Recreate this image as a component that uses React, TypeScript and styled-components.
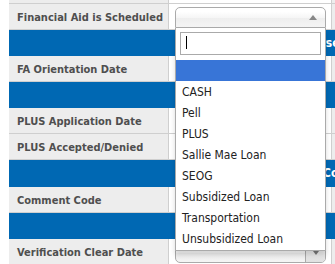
import React from "react";
import styled, { createGlobalStyle } from "styled-components";

const GlobalStyle = createGlobalStyle`
  html,
  body {
    margin: 0;
    padding: 0;
    overflow: hidden;
    background: #fff;
  }
  body {
    font-family: "DejaVu Sans Condensed", "Liberation Sans", sans-serif;
  }
`;

const Page = styled.div`
  width: 335px;
  height: 264px;
  overflow: hidden;
  padding-left: 9px;
  box-sizing: border-box;
`;

// first row is cut off by the top of the window
const Form = styled.div`
  margin-top: -22px;
  width: 600px;
`;

const FieldRow = styled.div`
  display: grid;
  grid-template-columns: 160px 163px 1fr;
  height: 26px;
`;

const Label = styled.div`
  box-sizing: border-box;
  display: flex;
  align-items: center;
  padding: 2px 8px 0;
  background: #ededed;
  border-right: 1px solid #cfcfcf;
  border-bottom: 1px solid #cfcfcf;
  color: #4f4f4f;
  font-size: 11px;
  font-weight: bold;
  white-space: nowrap;
`;

const Value = styled.div`
  box-sizing: border-box;
  position: relative;
  padding: 3px 0 0 6px;
  background: #fff;
  border-right: 1px solid #cfcfcf;
  border-bottom: 1px solid #cfcfcf;
`;

const Extra = styled.div`
  box-sizing: border-box;
  background: #ededed;
  border-bottom: 1px solid #cfcfcf;
`;

const SectionRow = styled.div<{ $indent: number; $tall?: boolean }>`
  box-sizing: border-box;
  height: ${p => (p.$tall ? 27 : 26)}px;
  padding-left: ${p => p.$indent}px;
  background: #0068b3;
  color: #fff;
  font-size: 12px;
  font-weight: bold;
  line-height: 26px;
  white-space: nowrap;
`;

/**
 * chosen style select
 */
const Chosen = styled.div`
  position: relative;
  width: 151px;
  font-size: 12px;
`;

const Single = styled.div<{ $open?: boolean }>`
  box-sizing: border-box;
  display: flex;
  align-items: center;
  justify-content: flex-end;
  height: 21px;
  border: 1px solid #aaa;
  border-radius: ${p => (p.$open ? "5px 5px 0 0" : "5px")};
  background: linear-gradient(#fff 20%, #f6f6f6 50%, #eee 52%, #f4f4f4 100%);
  overflow: hidden;
`;

const ArrowBox = styled.div<{ $divided?: boolean }>`
  display: flex;
  align-items: center;
  justify-content: center;
  width: ${p => (p.$divided ? 19 : 12)}px;
  height: 100%;
  margin-right: ${p => (p.$divided ? 0 : 6)}px;
  border-left: ${p => (p.$divided ? "1px solid #aaa" : "0")};
  background: ${p => (p.$divided ? "linear-gradient(#f4f4f4, #e0e0e0)" : "transparent")};
`;

const Drop = styled.div`
  position: absolute;
  top: 21px;
  left: 0;
  z-index: 10;
  box-sizing: border-box;
  width: 151px;
  border: 1px solid #aaa;
  border-top: 0;
  background: #fff;
  box-shadow: 0 4px 5px rgba(0, 0, 0, 0.15);
`;

const Search = styled.div`
  position: relative;
  padding: 4px 4px 5px;
`;

const SearchInput = styled.input`
  display: block;
  box-sizing: border-box;
  width: 141px;
  height: 23px;
  margin: 0;
  padding: 0 5px;
  border: 1px solid #aaa;
  outline: none;
  background: #fff;
`;

const Caret = styled.span`
  position: absolute;
  top: 8px;
  left: 10px;
  width: 1px;
  height: 13px;
  background: #000;
`;

const Results = styled.ul`
  margin: 0 0 1px;
  padding: 0;
  list-style: none;
`;

const Option = styled.li<{ $active?: boolean }>`
  box-sizing: border-box;
  height: 21px;
  padding: 1px 6px 0;
  background: ${p => (p.$active ? "#3875d7" : "transparent")};
  color: ${p => (p.$active ? "#fff" : "#222")};
  font-size: 12px;
  line-height: 20px;
  white-space: nowrap;
`;

const UpArrow = () => (
  <svg width="8" height="5" viewBox="0 0 8 5">
    <polygon points="0,5 4,0 8,5" fill="#888" />
  </svg>
);

const DownArrow = () => (
  <svg width="6" height="4" viewBox="0 0 6 4">
    <polygon points="0,0 6,0 3,4" fill="#777" />
  </svg>
);

const aidTypes = [
  "",
  "CASH",
  "Pell",
  "PLUS",
  "Sallie Mae Loan",
  "SEOG",
  "Subsidized Loan",
  "Transportation",
  "Unsubsidized Loan",
];

const Field = ({ label, children }: { label?: string; children?: React.ReactNode }) => (
  <FieldRow>
    <Label>{label}</Label>
    <Value>{children}</Value>
    <Extra />
  </FieldRow>
);

export default function App() {
  return (
    <Page>
      <GlobalStyle />
      <Form>
        <Field />
        <Field label="Financial Aid is Scheduled">
          <Chosen>
            <Single $open>
              <ArrowBox>
                <UpArrow />
              </ArrowBox>
            </Single>
            <Drop>
              <Search>
                <SearchInput type="text" />
                <Caret />
              </Search>
              <Results>
                {aidTypes.map((t, i) => (
                  <Option key={i} $active={i === 0}>
                    {t}
                  </Option>
                ))}
              </Results>
            </Drop>
          </Chosen>
        </Field>
        <SectionRow $indent={277}>Disbursement</SectionRow>
        <Field label="FA Orientation Date" />
        <SectionRow $indent={205}>PLUS Loan</SectionRow>
        <Field label="PLUS Application Date" />
        <Field label="PLUS Accepted/Denied" />
        <SectionRow $indent={314} $tall>
          Comments
        </SectionRow>
        <Field label="Comment Code" />
        <SectionRow $indent={205}>Verification</SectionRow>
        <Field label="Verification Clear Date">
          <Chosen>
            <Single>
              <ArrowBox $divided>
                <DownArrow />
              </ArrowBox>
            </Single>
          </Chosen>
        </Field>
      </Form>
    </Page>
  );
}
